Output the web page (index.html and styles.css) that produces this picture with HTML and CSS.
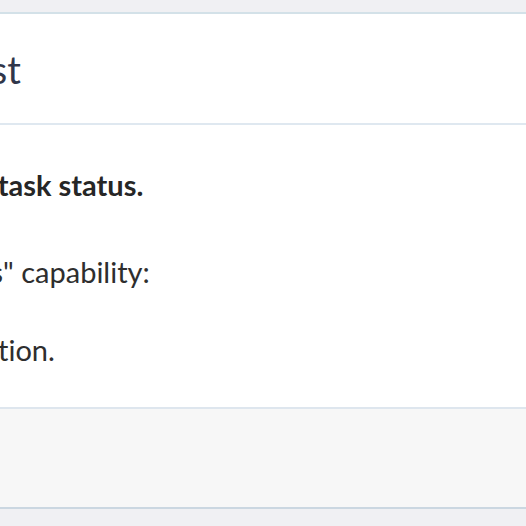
FILE: index.html
```html
<!DOCTYPE html>
<html>
<head>
<meta charset="utf-8">
<link rel="stylesheet" href="styles.css">
</head>
<body>
<div class="page">
  <div class="modal">
    <div class="modal-header">
      <h2 class="title">Permission Request</h2>
    </div>
    <div class="modal-body">
      <p class="lead">This app wants to update task status.</p>
      <p class="cap">It requires the "Write Tasks" capability:</p>
      <p class="item">Allow task status modification.</p>
    </div>
    <div class="modal-footer"></div>
  </div>
</div>
</body>
</html>
```
FILE: styles.css
```css
html, body {
  margin: 0;
  padding: 0;
  background: #f0f0f3;
  overflow: hidden;
}
.page {
  padding-top: 12px;
  width: 526px;
  height: 526px;
  overflow: hidden;
}
.modal {
  margin-left: -373px;
  width: 1000px;
  background: #fff;
  border-top: 2px solid #d3e1e8;
  border-bottom: 2px solid #cbd7e1;
  font-variant-ligatures: no-common-ligatures;
}
.modal-header {
  height: 109px;
  border-bottom: 2px solid #dfe8f0;
  display: flex;
  align-items: center;
  padding-left: 68px;
}
.title {
  margin: 0;
  font-family: Lato, sans-serif;
  font-weight: 400;
  font-size: 38px;
  color: #30364a;
}
.modal-body {
  height: 284px;
  padding-left: 40px;
  padding-top: 42px;
  box-sizing: border-box;
  border-bottom: 2px solid #dee6ee;
  font-family: Lato, sans-serif;
  font-size: 29px;
  line-height: 36px;
  color: #2e2e2e;
}
.modal-body p {
  margin: 0;
  white-space: nowrap;
}
.lead {
  font-weight: 700;
  color: #262626;
}
.cap {
  margin-top: 51px !important;
  margin-left: -6px !important;
}
.item {
  margin-top: 42px !important;
}
.modal-footer {
  height: 98px;
  background: #f7f7f7;
}
```
